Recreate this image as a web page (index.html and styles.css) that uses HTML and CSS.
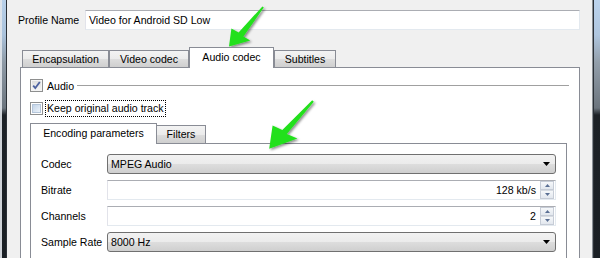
FILE: index.html
```html
<!DOCTYPE html>
<html>
<head>
<meta charset="utf-8">
<link rel="stylesheet" href="styles.css">
</head>
<body>
<div class="window">
  <div class="frame frame-left"></div>
  <div class="content">
    <div class="profile-row">
      <span class="profile-label">Profile Name</span>
      <div class="textbox">Video for Android SD Low</div>
    </div>
    <div class="tabwidget outer">
      <div class="tabbar">
        <div class="tab w-encap">Encapsulation</div>
        <div class="tab w-video">Video codec</div>
        <div class="tab selected w-audio">Audio codec</div>
        <div class="tab w-subs">Subtitles</div>
      </div>
      <div class="pane outer-pane">
        <div class="group-row">
          <span class="checkbox checked">
            <svg width="11" height="11" viewBox="0 0 11 11"><path d="M2.2 5.6 L4.3 8.1 L8.8 2" fill="none" stroke="#4d62a0" stroke-width="1.8"/></svg>
          </span>
          <span class="group-label">Audio</span>
          <span class="group-line"></span>
        </div>
        <div class="check-row">
          <span class="checkbox unchecked"><span class="check-inner"></span></span>
          <span class="focus-text">Keep original audio track</span>
        </div>
        <div class="tabwidget inner">
          <div class="tabbar inner-bar">
            <div class="tab selected w-enc">Encoding parameters</div>
            <div class="tab w-filters">Filters</div>
          </div>
          <div class="pane inner-pane">
            <div class="form">
              <span class="form-label">Codec</span>
              <div class="combo"><span>MPEG Audio</span><svg class="combo-arrow" width="7" height="4" viewBox="0 0 7 4"><path d="M0 0H7L3.5 4Z" fill="#000"/></svg></div>
              <span class="form-label">Bitrate</span>
              <div class="spinbox"><span class="spin-value">128 kb/s</span><span class="spin"><span class="spin-btn"><svg width="5" height="3" viewBox="0 0 5 3"><path d="M0 3H5L2.5 0Z" fill="#5a6f94"/></svg></span><span class="spin-btn"><svg width="5" height="3" viewBox="0 0 5 3"><path d="M0 0H5L2.5 3Z" fill="#5a6f94"/></svg></span></span></div>
              <span class="form-label">Channels</span>
              <div class="spinbox"><span class="spin-value">2</span><span class="spin"><span class="spin-btn"><svg width="5" height="3" viewBox="0 0 5 3"><path d="M0 3H5L2.5 0Z" fill="#5a6f94"/></svg></span><span class="spin-btn"><svg width="5" height="3" viewBox="0 0 5 3"><path d="M0 0H5L2.5 3Z" fill="#5a6f94"/></svg></span></span></div>
              <span class="form-label">Sample Rate</span>
              <div class="combo"><span>8000 Hz</span><svg class="combo-arrow" width="7" height="4" viewBox="0 0 7 4"><path d="M0 0H7L3.5 4Z" fill="#000"/></svg></div>
            </div>
          </div>
        </div>
      </div>
    </div>
  </div>
  <div class="frame frame-right"></div>
  <svg class="arrows" width="600" height="258" viewBox="0 0 600 258">
    <defs>
      <filter id="sh" x="-20%" y="-20%" width="150%" height="150%">
        <feDropShadow dx="1.5" dy="1.5" stdDeviation="1" flood-color="#000" flood-opacity="0.45"/>
      </filter>
    </defs>
    <polygon filter="url(#sh)" fill="#22e01c" points="262.4,6.4 263.8,7.6 243.4,36.6 250.2,40.6 229,46.6 231.4,28.4 238.6,32.4"/>
    <polygon filter="url(#sh)" fill="#22e01c" points="312.2,100.2 313.8,101.8 286.8,134.1 297.4,138.6 269.2,148.8 272.6,125.4 282.3,130"/>
  </svg>
</div>
</body>
</html>
```

FILE: styles.css
```css
html, body {
  margin: 0;
  padding: 0;
}
body {
  width: 600px;
  height: 258px;
  overflow: hidden;
  font-family: "Liberation Sans", Arial, sans-serif;
  font-size: 10.6px;
  color: #000;
}
.window {
  position: relative;
  display: flex;
  height: 258px;
  background: #f0f0f0;
  overflow: hidden;
}
.frame {
  flex: none;
  height: 100%;
}
.frame-left {
  width: 7px;
  background:
    linear-gradient(to right, rgba(226, 230, 235, 0.9) 0 2px, transparent 2px 6px, #2b3036 6px 7px),
    linear-gradient(to bottom, #b9d1ea 0, #abc3dc 35px, #8f9ba7 62px, #6c757e 108px, #1d2227 115px, #1a1f24 100%);
}
.frame-right {
  width: 8px;
  background:
    linear-gradient(to right, #8a9096 0 1px, #2b3036 1px 2px, transparent 2px),
    linear-gradient(to bottom, #bcd4ee 0, #afc6df 35px, #939fab 62px, #6c757e 108px, #1d2227 115px, #1a1f24 100%);
}
.content {
  flex: 1;
  min-width: 0;
  padding: 10px 12px 0 11px;
}
.profile-row {
  display: flex;
  align-items: center;
  height: 20px;
}
.profile-label {
  width: 67px;
  flex: none;
}
.textbox {
  flex: 1;
  box-sizing: border-box;
  height: 20px;
  line-height: 18px;
  padding-left: 3px;
  background: #fff;
  border: 1px solid;
  border-color: #abadb3 #e3e9ef #e3e9ef #e2e3ea;
}
.tabwidget.outer {
  margin: 17px 0 0 2px;
}
.tabbar {
  display: flex;
  align-items: flex-end;
  height: 20px;
  padding-left: 2px;
  position: relative;
  z-index: 1;
}
.tab {
  box-sizing: border-box;
  height: 17px;
  line-height: 16px;
  text-align: center;
  border: 1px solid #898c95;
  border-bottom: none;
  background: linear-gradient(to bottom, #f3f3f3 0%, #ebebeb 50%, #dddddd 51%, #cfcfcf 100%);
  flex: none;
  white-space: nowrap;
}
.tab.selected {
  height: 21px;
  line-height: 19px;
  margin-bottom: -1px;
  background: #fff;
  position: relative;
  z-index: 2;
}
.w-encap { width: 87px; }
.w-video { width: 80px; }
.w-audio { width: 85px; }
.w-subs { width: 62px; }
.pane {
  border: 1px solid #898c95;
  background: #fff;
}
.outer-pane {
  height: 220px;
  padding: 11px 10px 0 9px;
}
.group-row {
  display: flex;
  align-items: center;
  height: 13px;
}
.checkbox {
  box-sizing: border-box;
  width: 13px;
  height: 13px;
  flex: none;
  border: 1px solid #8e8f8f;
  display: flex;
  align-items: center;
  justify-content: center;
}
.checkbox.checked {
  background: linear-gradient(to bottom, #dcdcdc, #f6f6f6);
  box-shadow: inset 0 0 0 1px #f4f4f4;
}
.checkbox.unchecked {
  background: #fff;
}
.check-inner {
  width: 9px;
  height: 9px;
  box-sizing: border-box;
  border: 1px solid #b5c6da;
  background: linear-gradient(135deg, #c3d4e8 0%, #dce7f3 60%, #eef4fb 100%);
}
.group-label {
  margin-left: 4px;
}
.group-line {
  flex: 1;
  height: 1px;
  background: #a0a0a0;
  margin-left: 3px;
}
.check-row {
  display: flex;
  align-items: center;
  height: 17px;
  margin-top: 8px;
}
.focus-text {
  margin-left: 2px;
  height: 17px;
  box-sizing: border-box;
  line-height: 15px;
  padding: 0 1px;
  border: 1px dotted #000;
}
.tabwidget.inner {
  margin: 6px 2px 0 0;
}
.inner-bar {
  padding-left: 0;
}
.inner-bar .tab {
  height: 18px;
  line-height: 17px;
}
.inner-bar .tab.selected {
  height: 21px;
  line-height: 19px;
}
.w-enc { width: 127px; }
.w-filters { width: 50px; margin-left: -1px; }
.inner-pane {
  height: 140px;
  padding: 10px 10px 0 10px;
}
.form {
  display: grid;
  grid-template-columns: 66px 1fr;
  grid-auto-rows: 20px;
  row-gap: 6px;
  align-items: center;
}
.combo {
  box-sizing: border-box;
  height: 20px;
  display: flex;
  align-items: center;
  justify-content: space-between;
  padding: 0 5px 0 3px;
  border: 1px solid #707070;
  border-radius: 3px;
  background: linear-gradient(to bottom, #f2f2f2 0%, #ebebeb 50%, #dddddd 51%, #cfcfcf 100%);
}
.combo-arrow {
  display: block;
}
.spinbox {
  box-sizing: border-box;
  height: 20px;
  display: flex;
  align-items: center;
  background: #fff;
  border: 1px solid;
  border-color: #abadb3 #e3e9ef #e3e9ef #e2e3ea;
  padding-right: 1px;
}
.spin-value {
  flex: 1;
  text-align: right;
  padding-right: 4px;
}
.spin {
  display: flex;
  flex-direction: column;
  width: 14px;
  height: 18px;
}
.spin-btn {
  box-sizing: border-box;
  flex: 1;
  display: flex;
  align-items: center;
  justify-content: center;
  border: 1px solid #c6ccd6;
  background: linear-gradient(to bottom, #f6f8fa, #e2e7ee);
}
.spin-btn + .spin-btn {
  border-top-color: #d6dbe2;
}
.spin-btn svg {
  display: block;
}
.arrows {
  position: absolute;
  left: 0;
  top: 0;
  pointer-events: none;
}
```
